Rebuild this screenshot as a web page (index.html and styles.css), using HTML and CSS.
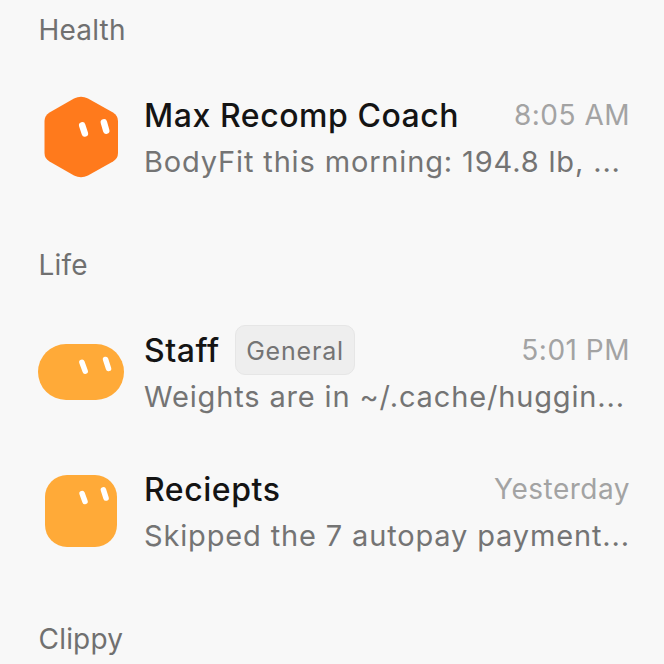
FILE: index.html
```html
<!DOCTYPE html>
<html lang="en">
<head>
<meta charset="utf-8">
<title>Chats</title>
<link rel="stylesheet" href="styles.css">
</head>
<body>
<main class="list">
  <section class="group">
    <h2 class="label">Health</h2>
    <div class="row">
      <div class="avatar">
        <svg viewBox="0 0 148 140" width="148" height="140"><path d="M74 28.500 Q81 25 88 28.500 L113 42.500 Q118 45.500 118 51 L118 83 Q118 88.500 113 91.500 L88 105.500 Q81 109 74 105.500 L49.500 91.500 Q44.500 88.500 44.500 83 L44.500 51 Q44.500 45.500 49.500 42.500 Z" fill="#ff7a1c"/><rect class="eye" x="80.300" y="52" width="6.500" height="15" rx="3.250" transform="rotate(-18 83.500 59.500)"/><rect class="eye" x="101.800" y="49" width="6.500" height="15" rx="3.250" transform="rotate(-16 105 56.500)"/></svg>
      </div>
      <div class="body">
        <div class="top"><span class="name">Max Recomp Coach</span><span class="time">8:05 AM</span></div>
        <div class="preview">BodyFit this morning: 194.8 lb, ...</div>
      </div>
    </div>
  </section>
  <section class="group">
    <h2 class="label">Life</h2>
    <div class="row">
      <div class="avatar">
        <svg viewBox="0 0 148 140" width="148" height="140"><rect x="38" y="39" width="86" height="56" rx="28" fill="#ffaa38"/><rect class="eye" x="80.800" y="54.200" width="5.500" height="15" rx="2.750" transform="rotate(-20 83.500 61.700)"/><rect class="eye" x="104.300" y="51.500" width="5.500" height="15" rx="2.750" transform="rotate(-18 107 59)"/></svg>
      </div>
      <div class="body">
        <div class="top"><span class="name">Staff</span><span class="tag">General</span><span class="time">5:01 PM</span></div>
        <div class="preview">Weights are in ~/.cache/huggin...</div>
      </div>
    </div>
    <div class="row">
      <div class="avatar">
        <svg viewBox="0 0 148 140" width="148" height="140"><rect x="45" y="31" width="72" height="72" rx="22" fill="#ffaa38"/><rect class="eye" x="80.800" y="46.500" width="5.500" height="14" rx="2.750" transform="rotate(-20 83.500 53.500)"/><rect class="eye" x="102" y="43" width="5.500" height="14" rx="2.750" transform="rotate(-18 104.700 50)"/></svg>
      </div>
      <div class="body">
        <div class="top"><span class="name">Reciepts</span><span class="time">Yesterday</span></div>
        <div class="preview">Skipped the 7 autopay payment...</div>
      </div>
    </div>
  </section>
  <section class="group">
    <h2 class="label">Clippy</h2>
  </section>
</main>
</body>
</html>
```
FILE: styles.css
```css
html, body {
  margin: 0;
  padding: 0;
  background: #f8f8f8;
  overflow: hidden;
  height: 664px;
}
body {
  font-family: Inter, "Noto Sans", sans-serif;
}
.list {
  display: flex;
  flex-direction: column;
  gap: 36px;
  padding-top: 10px;
}
.label {
  margin: 0 0 20px 38.500px;
  height: 40px;
  line-height: 40px;
  font-size: 28px;
  font-weight: 400;
  letter-spacing: 0.2px;
  color: #707070;
}
.row {
  display: flex;
  height: 139px;
  padding-left: 16px;
  padding-right: 34px;
}
.avatar {
  flex: none;
  width: 128px;
  height: 139px;
}
.avatar svg {
  display: block;
  margin-left: -16px;
}
.eye {
  fill: #fff;
}
.body {
  flex: 1;
  min-width: 0;
  display: flex;
  flex-direction: column;
  padding-top: 22px;
}
.top {
  display: flex;
  align-items: center;
  height: 46px;
}
.name {
  font-size: 32px;
  font-weight: 500;
  letter-spacing: 0.55px;
  color: #141414;
  white-space: nowrap;
}
.tag {
  margin-left: 15.500px;
  padding: 0 10px;
  height: 50px;
  line-height: 50px;
  box-sizing: border-box;
  border: 1px solid #e6e6e6;
  border-radius: 10px;
  background: #eeeeee;
  font-size: 25px;
  letter-spacing: 0.8px;
  color: #747474;
}
.time {
  margin-left: auto;
  font-size: 28px;
  letter-spacing: 0.5px;
  color: #a3a3a3;
  white-space: nowrap;
}
.preview {
  height: 46px;
  line-height: 48px;
  font-size: 29px;
  letter-spacing: 0.85px;
  color: #747474;
  white-space: nowrap;
}
```
